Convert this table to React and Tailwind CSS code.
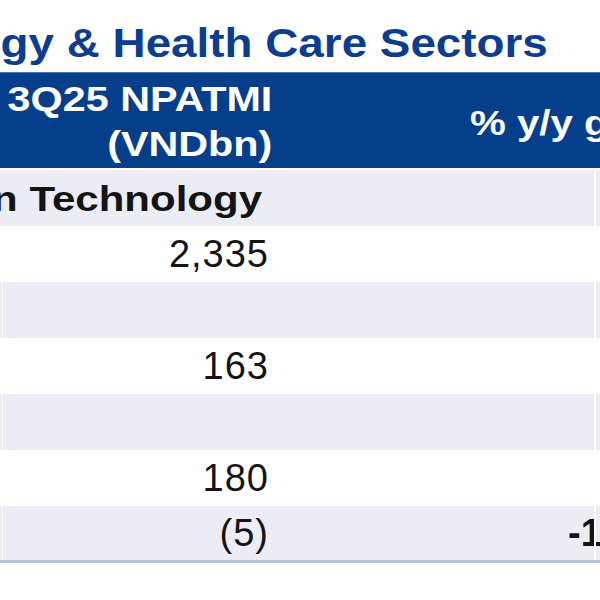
import React from 'react';

const rows = [
    { npatmi: '2,335', growth: '', shade: false },
    { npatmi: '', growth: '', shade: true },
    { npatmi: '163', growth: '', shade: false },
    { npatmi: '', growth: '', shade: true },
    { npatmi: '180', growth: '', shade: false },
    { npatmi: '(5)', growth: '-115%', shade: true, last: true },
];

const Row = ({ npatmi, growth, shade, last }) => {
    return (
        <div className={"flex " + (last ? "h-[54px] " : "h-[56px] ") + (shade ? "bg-[#ecedf4]" : "bg-white")}>
            <div className="w-[2px] shrink-0"></div>
            <div className="w-px shrink-0 bg-white"></div>
            <div className="w-[287px] shrink-0 flex items-center justify-end pr-[21px] text-[38px] tracking-[1px] leading-none text-[#141414]">
                {npatmi}
            </div>
            <div className="w-[304px] shrink-0 flex items-center pl-[278px] whitespace-nowrap text-[38px] font-bold leading-none text-[#141414]">
                {growth}
            </div>
            <div className="w-[2px] shrink-0 bg-white"></div>
            <div className="flex-1"></div>
        </div>
    );
}

const App = () => {
    return (
        <div className="w-[600px] h-[600px] overflow-hidden bg-white font-['Liberation_Sans',Arial,sans-serif]">
            {/* title, cut on the left */}
            <div className="h-[72px] pt-[23px]">
                <div className="w-[548px] flex justify-end whitespace-nowrap">
                    <h1 className="inline-block shrink-0 scale-x-[1.145] origin-right text-[40px] leading-none font-bold text-[#0c3d8f]">
                        Information Technology &amp; Health Care Sectors
                    </h1>
                </div>
            </div>

            {/* header */}
            <div className="flex h-[96px] bg-[#053e8b] border-t border-[#4d72b3] text-white font-bold text-[35px]">
                <div className="w-[290px] shrink-0 pt-[3px] pr-[18px] flex justify-end whitespace-nowrap">
                    <div className="shrink-0 text-right leading-[45px] scale-x-[1.18] origin-right">
                        <div>3Q25 NPATMI</div>
                        <div>(VNDbn)</div>
                    </div>
                </div>
                <div className="w-[610px] shrink-0 flex items-center pl-[180px] pt-[4px] whitespace-nowrap leading-none">
                    <span className="inline-block scale-x-[1.15] origin-left">% y/y growth</span>
                </div>
            </div>
            <div className="h-[2px] bg-white"></div>

            {/* sector label */}
            <div className="flex h-[56px] bg-[#ecedf4]">
                <div className="w-[262px] shrink-0 flex items-center justify-end whitespace-nowrap text-[35px] font-bold leading-none text-[#141414]">
                    <span className="inline-block shrink-0 scale-x-[1.2] origin-right">Information Technology</span>
                </div>
                <div className="w-[332px] shrink-0"></div>
                <div className="w-[2px] shrink-0 bg-white"></div>
                <div className="flex-1"></div>
            </div>

            {rows.map((r, i) => (
                <Row key={i} {...r} />
            ))}
            <div className="h-[3px] bg-[#b6c2d8]"></div>
        </div>
    );
}

export default App;
